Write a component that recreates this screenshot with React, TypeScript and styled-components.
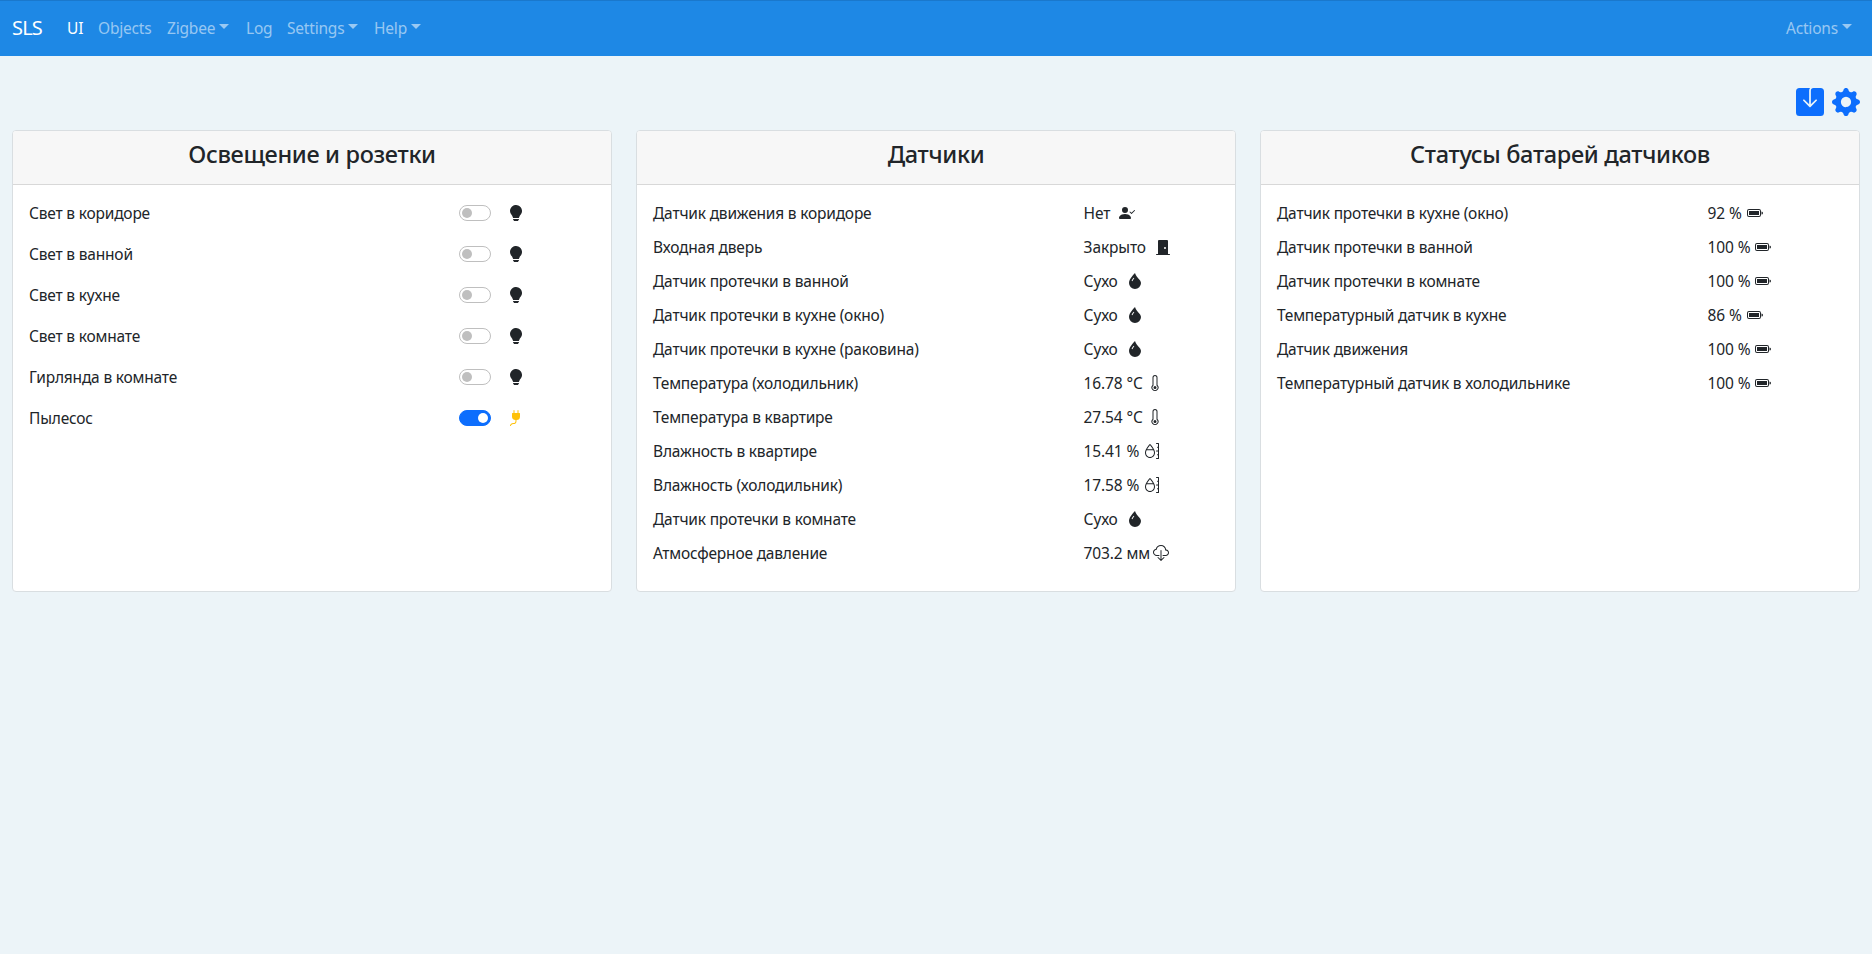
import React from "react";
import styled, { createGlobalStyle } from "styled-components";
import {
  BsSaveFill, BsGearFill, BsLightbulbFill, BsPlugFill, BsPersonCheckFill, BsDoorClosedFill,
  BsDropletFill, BsThermometer, BsMoisture, BsCloudDownload, BsBatteryFull,
} from "react-icons/bs";
import type { IconType } from "react-icons";

const Global = createGlobalStyle`
  * { box-sizing: border-box; }
  body { margin: 0; background: #fff; color: #212529; font: 15.5px/24px "Segoe UI", "Noto Sans", "Open Sans", sans-serif; }
`;
const Page = styled.div`min-height: 954px; background: #ecf4f8;`;
const Navbar = styled.nav`
  height: 56px; padding: 0 12px 1px; display: flex; align-items: center;
  background: #1e88e5; border-top: 1px solid #1a78cc;
`;
const Brand = styled.a`font-size: 20px; line-height: 30px; color: #fff; width: 47px; letter-spacing: -0.8px;`;
const NavLink = styled.a<{ $w: number; $active?: boolean }>`
  display: flex; align-items: center; width: ${(p) => p.$w}px; padding-left: 8px; white-space: nowrap;
  letter-spacing: -0.2px;
  color: ${(p) => (p.$active ? "#fff" : "rgba(255,255,255,.55)")};
`;
const Caret = styled.span`
  margin-left: 4px; margin-top: -3px; border-top: 5px solid; border-left: 5px solid transparent; border-right: 5px solid transparent;
`;
const Spacer = styled.div`flex: 1;`;
const Tools = styled.div`
  display: flex; justify-content: flex-end; gap: 8px; padding: 32px 12px 14px; color: #0d6efd;
`;
const Cards = styled.main`display: grid; grid-template-columns: repeat(3, 600px); gap: 24px; padding: 0 12px;`;
const Card = styled.section`
  height: 462px; background: #fff; border: 1px solid #d9dee1; border-radius: 4px; overflow: hidden;
`;
const CardTitle = styled.h4`
  margin: 0; height: 54px; padding-top: 9px; border-bottom: 1px solid #d8d8d8; background: #f7f7f7;
  text-align: center; font-size: 23.5px; line-height: 29px; font-weight: 500; letter-spacing: -0.32px;
`;
const Rows = styled.div`padding: 11px 16px;`;
const Row = styled.div<{ $h: number }>`
  display: grid; grid-template-columns: 430px 1fr; height: ${(p) => p.$h}px; padding-top: 5px; white-space: nowrap;
`;
const Label = styled.span`letter-spacing: -0.19px;`;
const Value = styled.span<{ $gap: number }>`
  display: flex; gap: ${(p) => p.$gap}px; padding-left: 0.6px; letter-spacing: -0.13px;
  svg { margin-top: 4px; flex: none; }
`;
const Control = styled.span`display: flex; gap: 17px; padding-top: 4px; svg { display: block; }`;
const Switch = styled.span<{ $on?: boolean }>`
  width: 32px; height: 16px; border-radius: 8px; display: flex; align-items: center;
  justify-content: ${(p) => (p.$on ? "flex-end" : "flex-start")}; padding: 0 2px;
  border: 1px solid ${(p) => (p.$on ? "#0d6efd" : "#bfbfbf")}; background: ${(p) => (p.$on ? "#0d6efd" : "#fff")};
  &::after { content: ""; width: 10px; height: 10px; border-radius: 50%; background: ${(p) => (p.$on ? "#fff" : "#bfbfbf")}; }
`;

const nav: { t: string; w: number; menu?: boolean; active?: boolean }[] = [
  { t: "UI", w: 31, active: true }, { t: "Objects", w: 69 }, { t: "Zigbee", w: 79, menu: true },
  { t: "Log", w: 41 }, { t: "Settings", w: 87, menu: true }, { t: "Help", w: 70, menu: true },
];
const lights = ["Свет в коридоре", "Свет в ванной", "Свет в кухне", "Свет в комнате", "Гирлянда в комнате", "Пылесос"];
type Reading = [string, string, IconType, number];
const sensors: Reading[] = [
  ["Датчик движения в коридоре", "Нет", BsPersonCheckFill, 9],
  ["Входная дверь", "Закрыто", BsDoorClosedFill, 9],
  ["Датчик протечки в ванной", "Сухо", BsDropletFill, 9],
  ["Датчик протечки в кухне (окно)", "Сухо", BsDropletFill, 9],
  ["Датчик протечки в кухне (раковина)", "Сухо", BsDropletFill, 9],
  ["Температура (холодильник)", "16.78 °C", BsThermometer, 4],
  ["Температура в квартире", "27.54 °C", BsThermometer, 4],
  ["Влажность в квартире", "15.41 %", BsMoisture, 4],
  ["Влажность (холодильник)", "17.58 %", BsMoisture, 4],
  ["Датчик протечки в комнате", "Сухо", BsDropletFill, 9],
  ["Атмосферное давление", "703.2 мм", BsCloudDownload, 3],
];
const batteries: Reading[] = [
  ["Датчик протечки в кухне (окно)", "92 %", BsBatteryFull, 5],
  ["Датчик протечки в ванной", "100 %", BsBatteryFull, 5],
  ["Датчик протечки в комнате", "100 %", BsBatteryFull, 5],
  ["Температурный датчик в кухне", "86 %", BsBatteryFull, 5],
  ["Датчик движения", "100 %", BsBatteryFull, 5],
  ["Температурный датчик в холодильнике", "100 %", BsBatteryFull, 5],
];
const Readings = ({ items }: { items: Reading[] }) => (
  <Rows>
    {items.map(([label, value, Icon, gap]) => (
      <Row $h={34} key={label}>
        <Label>{label}</Label>
        <Value $gap={gap}>{value}<Icon size={16} /></Value>
      </Row>
    ))}
  </Rows>
);

export default function App() {
  return (
    <>
      <Global />
      <Page>
        <Navbar>
          <Brand>SLS</Brand>
          {nav.map((n) => (
            <NavLink key={n.t} $w={n.w} $active={n.active}>{n.t}{n.menu && <Caret />}</NavLink>
          ))}
          <Spacer />
          <NavLink $w={82}>Actions<Caret /></NavLink>
        </Navbar>
        <Tools><BsSaveFill size={28} /><BsGearFill size={28} /></Tools>
        <Cards>
          <Card>
            <CardTitle>Освещение и розетки</CardTitle>
            <Rows>
              {lights.map((label, i) => (
                <Row $h={41} key={label}>
                  <Label>{label}</Label>
                  <Control>
                    <Switch $on={i === 5} />
                    {i === 5 ? <BsPlugFill size={16} color="#ffc107" /> : <BsLightbulbFill size={16} />}
                  </Control>
                </Row>
              ))}
            </Rows>
          </Card>
          <Card><CardTitle>Датчики</CardTitle><Readings items={sensors} /></Card>
          <Card><CardTitle>Статусы батарей датчиков</CardTitle><Readings items={batteries} /></Card>
        </Cards>
      </Page>
    </>
  );
}
